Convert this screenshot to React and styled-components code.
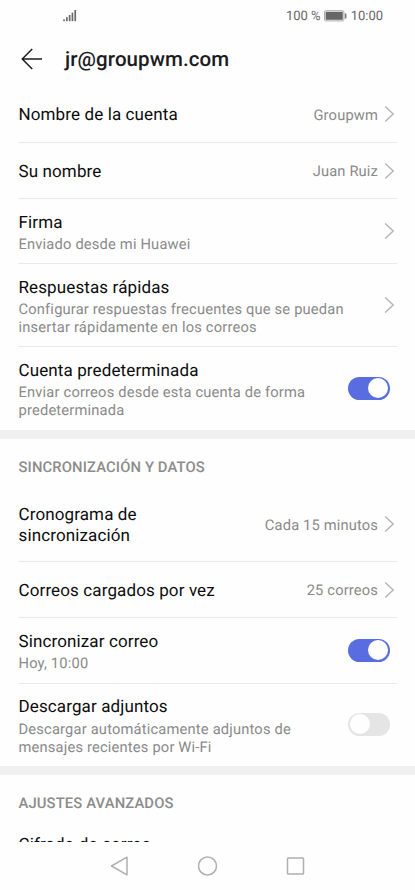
import React from 'react';
import styled, { createGlobalStyle } from 'styled-components';

const GlobalStyle = createGlobalStyle`
  * {
    box-sizing: border-box;
  }
  body {
    margin: 0;
    background: #fefefe;
    font-family: Roboto, "Liberation Sans", sans-serif;
    text-rendering: geometricPrecision;
  }
`;

const Screen = styled.div`
  width: 415px;
  height: 890px;
  display: flex;
  flex-direction: column;
  overflow: hidden;
  background: #fefefe;
`;

const StatusBar = styled.div`
  flex: none;
  height: 32px;
  padding: 0 32px 0 63px;
  display: flex;
  align-items: center;
  justify-content: space-between;
  color: #666;
  font-size: 13px;
  > div {
    display: flex;
    align-items: center;
  }
  svg {
    display: block;
  }
`;

const Percent = styled.span`
  margin-right: 3px;
`;

const Clock = styled.span`
  margin-left: 4px;
`;

const TitleBar = styled.header`
  flex: none;
  height: 54px;
  padding: 0 21px;
  display: flex;
  align-items: center;
  gap: 22px;
  svg {
    display: block;
  }
  h1 {
    margin: 0;
    padding-top: 1.5px;
    font-size: 20.5px;
    line-height: 24px;
    font-weight: 500;
    color: #1c1c1e;
    letter-spacing: .1px;
  }
`;

const Content = styled.main`
  flex: 1;
  min-height: 0;
  overflow: hidden;
`;

const Row = styled.div`
  height: ${({ $height }) => $height}px;
  margin: 0 18px;
  padding-left: .5px;
  padding-right: ${({ $toggle }) => $toggle ? 7 : 2}px;
  border-bottom: 1px solid ${({ $last }) => $last ? 'transparent' : '#e9e9e9'};
  display: flex;
  align-items: center;
  justify-content: space-between;
`;

const Texts = styled.div`
  align-self: ${({ $top }) => $top ? 'flex-start' : 'center'};
  padding-top: ${({ $top }) => $top ? 13.8 : 3}px;
  white-space: pre-line;
`;

const Label = styled.div`
  font-size: 17px;
  line-height: 20.5px;
  letter-spacing: .12px;
  color: #0c0c0c;
`;

const Detail = styled.div`
  margin-top: 2.2px;
  font-size: 14.7px;
  line-height: 18px;
  letter-spacing: .18px;
  color: #8a8a8a;
`;

const Side = styled.div`
  display: flex;
  align-items: center;
  gap: 6px;
  svg {
    display: block;
  }
`;

const Value = styled.span`
  padding-top: 1px;
  font-size: 14.7px;
  line-height: 18px;
  letter-spacing: .15px;
  color: #8a8a8a;
`;

const Toggle = styled.span`
  width: 42px;
  height: 23px;
  padding: 1.5px 2px;
  border-radius: 12px;
  display: flex;
  justify-content: ${({ $on }) => $on ? 'flex-end' : 'flex-start'};
  background: ${({ $on }) => $on ? '#596de0' : '#e5e5e5'};
  &::after {
    content: '';
    width: 20px;
    height: 20px;
    border-radius: 50%;
    background: #fefefe;
  }
`;

const Band = styled.div`
  height: 9px;
  background: #f0f0f0;
`;

const SectionTitle = styled.h2`
  margin: 0;
  height: 48px;
  padding: 18.5px 18.5px 0;
  font-size: 14.8px;
  line-height: 18px;
  font-weight: 500;
  letter-spacing: .13px;
  color: #8c8c8c;
`;

const NavBar = styled.nav`
  flex: none;
  height: 48px;
  display: flex;
  align-items: center;
  justify-content: center;
  gap: 68px;
  svg {
    display: block;
  }
`;

const SignalIcon = () => (
  <svg width="14" height="13" viewBox="0 0 14 13" fill="#6a6a6a">
    <rect x="0.2" y="9.4" width="1.7" height="1.8" />
    <rect x="3" y="7.2" width="1.7" height="4" />
    <rect x="5.8" y="5" width="1.7" height="6.2" />
    <rect x="8.6" y="2.6" width="1.7" height="8.6" />
    <rect x="11.4" y="0" width="1.7" height="11.2" />
  </svg>
);

const BatteryIcon = () => (
  <svg width="23" height="12" viewBox="0 0 23 12">
    <rect x="0.5" y="0.7" width="19.4" height="10.2" rx="1.3" fill="#fefefe" stroke="#aaa" />
    <rect x="1.6" y="1.8" width="17.2" height="8" fill="#666" />
    <rect x="20.8" y="3.4" width="1.6" height="5" rx=".4" fill="#777" />
  </svg>
);

const BackIcon = () => (
  <svg width="22" height="22" viewBox="0 0 22 22" fill="none" stroke="#1c1c1e" strokeWidth="1.5">
    <path d="M21 11H1.5M11.2 1L1.2 11l10 10" strokeLinejoin="round" />
  </svg>
);

const Chevron = () => (
  <svg width="11" height="16" viewBox="0 0 11 16" fill="none" stroke="#b4b4b4" strokeWidth="1.4">
    <path d="M1.2 .6L9.2 8l-8 7.4" />
  </svg>
);

const Setting = ({ label, detail, value, on, height, last }) => {
  const toggle = on !== undefined;
  return (
    <Row $height={ height } $toggle={ toggle } $last={ last }>
      <Texts $top={ !!detail }>
        <Label>{ label }</Label>
        { detail && <Detail>{ detail }</Detail> }
      </Texts>
      <Side>
        { value && <Value>{ value }</Value> }
        { toggle ? <Toggle $on={ on } /> : !last && <Chevron /> }
      </Side>
    </Row>
  );
}

const account = [
  { label: 'Nombre de la cuenta', value: 'Groupwm', height: 57 },
  { label: 'Su nombre', value: 'Juan Ruiz', height: 56 },
  { label: 'Firma', detail: 'Enviado desde mi Huawei', height: 65 },
  { label: 'Respuestas rápidas', detail: 'Configurar respuestas frecuentes que se puedan\ninsertar rápidamente en los correos', height: 83 },
  { label: 'Cuenta predeterminada', detail: 'Enviar correos desde esta cuenta de forma\npredeterminada', on: true, height: 83, last: true },
];

const sync = [
  { label: 'Cronograma de\nsincronización', value: 'Cada 15 minutos', height: 75 },
  { label: 'Correos cargados por vez', value: '25 correos', height: 56 },
  { label: 'Sincronizar correo', detail: 'Hoy, 10:00', on: true, height: 65.5 },
  { label: 'Descargar adjuntos', detail: 'Descargar automáticamente adjuntos de\nmensajes recientes por Wi-Fi', on: false, height: 82.5, last: true },
];

const App = () => (
  <Screen>
    <GlobalStyle />
    <StatusBar>
      <SignalIcon />
      <div>
        <Percent>100 %</Percent>
        <BatteryIcon />
        <Clock>10:00</Clock>
      </div>
    </StatusBar>
    <TitleBar>
      <BackIcon />
      <h1>jr@groupwm.com</h1>
    </TitleBar>
    <Content>
      { account.map((item) => <Setting key={ item.label } { ...item } />) }
      <Band />
      <SectionTitle>SINCRONIZACIÓN Y DATOS</SectionTitle>
      { sync.map((item) => <Setting key={ item.label } { ...item } />) }
      <Band />
      <SectionTitle>AJUSTES AVANZADOS</SectionTitle>
      <Setting label="Cifrado de correo" height={ 43 } last />
    </Content>
    <NavBar>
      <svg width="20" height="20" viewBox="0 0 20 20" fill="none" stroke="#b0b0b0" strokeWidth="1.5">
        <path d="M17 1.2v17.6L1.5 10z" strokeLinejoin="round" />
      </svg>
      <svg width="20" height="20" viewBox="0 0 20 20" fill="none" stroke="#b0b0b0" strokeWidth="1.5">
        <circle cx="9.5" cy="10" r="9" />
      </svg>
      <svg width="20" height="20" viewBox="0 0 20 20" fill="none" stroke="#b0b0b0" strokeWidth="1.5">
        <rect x="1.5" y="2" width="16" height="16" rx=".8" />
      </svg>
    </NavBar>
  </Screen>
);

export default App;
